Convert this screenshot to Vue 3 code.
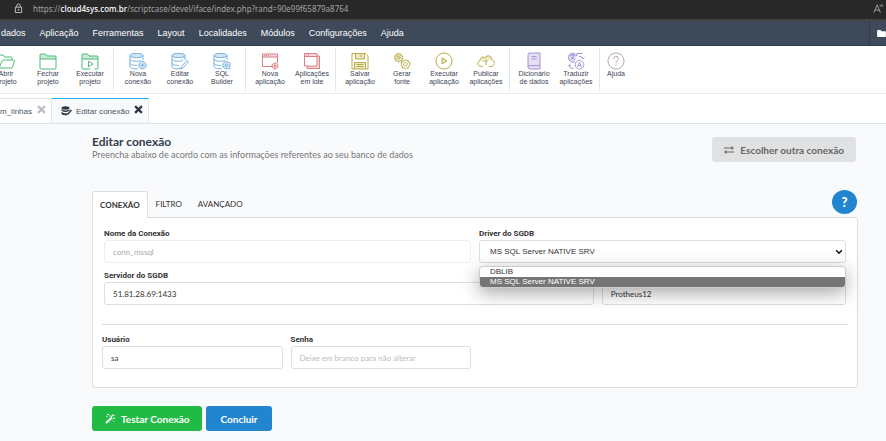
<template>
  <div class="page">
    <div class="address-bar">
      <svg class="lock" viewBox="0 0 10 12">
        <path d="M3 4.500V3a2 2 0 0 1 4 0v1.500M1.500 4.500h7v6h-7z" />
        <circle cx="5" cy="7.500" r=".6" />
      </svg>
      <div class="url">https://<b>cloud4sys.com.br</b>/scriptcase/devel/iface/index.php?rand=90e99f65879a8764</div>
      <svg class="read-aloud" viewBox="0 0 12 12">
        <path d="M1 10.500L4.500 2L8 10.500M2.200 7.800h4.600M7.500 2l1 2.200M9.300 1l1.500 3.200" />
      </svg>
    </div>

    <nav class="menu">
      <a v-for="m in menu" :key="m" href="#">{{ m }}</a>
      <button class="folder" aria-label="Projeto">
        <svg viewBox="0 0 10 8"><path d="M0 1q0-1 1-1h3l1 1.500h4q1 0 1 1V7q0 1-1 1H1q-1 0-1-1z" /></svg>
      </button>
    </nav>

    <div class="toolbar">
      <div v-for="(group, g) in toolbar" :key="g" class="group">
        <button v-for="item in group.items" :key="item.label" class="tool" :class="group.color">
          <svg viewBox="0 0 18 18">
            <path v-if="item.fill" class="tint" :d="icons[item.fill]" />
            <path :d="icons[item.icon]" />
          </svg>
          <span>{{ item.label }}</span>
        </button>
      </div>
    </div>

    <div class="tabs">
      <div class="tab first">
        <a href="#">m_linhas</a>
        <button class="close" aria-label="Fechar m_linhas">
          <svg viewBox="0 0 8 8"><path d="M1 1l6 6M7 1L1 7" /></svg>
        </button>
      </div>
      <div class="tab active">
        <svg class="db" viewBox="0 0 11 10">
          <ellipse cx="4.500" cy="2" rx="4" ry="1.700" />
          <path d="M.5 3.200q4 2.400 8 0v1.600q-4 2.400-8 0zM.5 6q4 2.400 6.500.8L6 9.200Q2.500 9.800.5 8z" />
          <path d="M10 3.500l1 1-3.500 4-1.400.5.400-1.500z" />
        </svg>
        <a href="#">Editar conexão</a>
        <button class="close" aria-label="Fechar Editar conexão">
          <svg viewBox="0 0 8 8"><path d="M1 1l6 6M7 1L1 7" /></svg>
        </button>
      </div>
    </div>

    <main class="content">
      <header class="heading">
        <div>
          <h1>Editar conexão</h1>
          <p>Preencha abaixo de acordo com as informações referentes ao seu banco de dados</p>
        </div>
        <button class="btn grey">
          <svg viewBox="0 0 10 8"><path d="M0 2h8M2 6h8" /><path class="solid" d="M7.500 0L10 2L7.500 4zM2.500 4L0 6l2.500 2z" /></svg>
          Escolher outra conexão
        </button>
      </header>

      <div class="panel-tabs">
        <button class="panel-tab" :class="{ active: current === t }" v-for="t in panelTabs" :key="t" @click="current = t">{{ t }}</button>
        <button class="help" aria-label="Ajuda">?</button>
      </div>

      <form class="panel" @submit.prevent>
        <div class="row half">
          <div class="field">
            <label for="name">Nome da Conexão</label>
            <input id="name" type="text" value="conn_mssql" disabled>
          </div>
          <div class="field">
            <label for="driver">Driver do SGDB</label>
            <div class="select">
              <select id="driver" v-model="driver">
                <option v-for="d in drivers" :key="d">{{ d }}</option>
              </select>
              <svg viewBox="0 0 8 6"><path d="M1.200 1.300L4 4.200l2.800-2.900" /></svg>
              <ul class="options">
                <li v-for="d in drivers" :key="d" :class="{ selected: d === driver }" @click="driver = d">{{ d }}</li>
              </ul>
            </div>
          </div>
        </div>
        <div class="row server">
          <div class="field">
            <label for="server">Servidor do SGDB</label>
            <input id="server" type="text" value="51.81.28.69:1433">
          </div>
          <div class="field">
            <label for="database">Banco de dados</label>
            <input id="database" type="text" value="Protheus12">
          </div>
        </div>
        <div class="row login">
          <div class="field">
            <label for="user">Usuário</label>
            <input id="user" type="text" value="sa">
          </div>
          <div class="field">
            <label for="password">Senha</label>
            <input id="password" type="password" placeholder="Deixe em branco para não alterar">
          </div>
        </div>
      </form>

      <div class="actions">
        <button class="btn green">
          <svg viewBox="0 0 10 10"><path class="wand" d="M1 9L7 3.500" /><path d="M6 2.500L9.500 1M8 4.500l2-.5M4 1.500l1.500 1M1 2l1.500 1M8 6.500l1 1M2 .5h2M7.500.5l-.5 1.500" /></svg>
          Testar Conexão
        </button>
        <button class="btn blue">Concluir</button>
      </div>
    </main>
  </div>
</template>

<script setup>
import { ref } from 'vue'

const menu = ['dados', 'Aplicação', 'Ferramentas', 'Layout', 'Localidades', 'Módulos', 'Configurações', 'Ajuda']
const panelTabs = ['CONEXÃO', 'FILTRO', 'AVANÇADO']
const current = ref('CONEXÃO')
const drivers = ['DBLIB', 'MS SQL Server NATIVE SRV']
const driver = ref('MS SQL Server NATIVE SRV')

const cylinder = 'M1 3.500C1 .7 14 .7 14 3.500S1 6.300 1 3.500V7c0 2.600 8 2.700 11 1.500M14 3.500v4.500M1 7v4c0 2 4 2.500 7 2.300M1 11v3.500c0 2 4 2.500 8 2.200'
const icons = {
  folderOpen: 'M2 16L1 4q0-1 1-1h4l1.500 2H14q1 0 1 1v2M2 16h12.500q.8 0 1-1L17.500 9q.2-1-.8-1H6.500q-1 0-1.300.8z',
  folder: 'M1 3q0-1 1-1h4.500L8 4h8q1 0 1 1v11q0 1-1 1H2q-1 0-1-1zM1 7h16',
  folderTop: 'M1 2h5.500L8 4h9v3H1z',
  folderRun: 'M9 17H2q-1 0-1-1V3q0-1 1-1h4.500L8 4h8q1 0 1 1v11q0 1-1 1h-2.500M1 7h16M7.500 9.200v5.600l4.500-2.800z',
  dbNew: cylinder + 'M13.500 9.500a3.700 3.700 0 1 0 .01 0M13.500 11.500v3.400M11.800 13.200h3.400',
  dbEdit: cylinder + 'M16 8.500l1.500 1.500-5.500 6-2.500 1 1-2.500z',
  dbSql: cylinder + 'M13.500 9.500a3.700 3.700 0 1 0 .01 0M13.500 12a1.300 1.300 0 1 0 .01 0M16 16l1.500 1.500',
  dbTop: 'M1 3.500C1 .7 14 .7 14 3.500S1 6.300 1 3.500z',
  dbTint: 'M1 3.500C1 .7 14 .7 14 3.500S1 6.300 1 3.500zM13.500 9.500a3.700 3.700 0 1 0 .01 0z',
  windowNew: 'M11 14.500H1.500V2h15v9M1.500 5h15M14 11a3 3 0 1 0 .01 0M14 12.500v3M12.500 14h3M3 3.500h1M5 3.500h1M7 3.500h1',
  windowTop: 'M1.500 2h15v3h-15zM14 11a3 3 0 1 0 .01 0z',
  windows: 'M1.500 1.500H14v12.500H1.500zM1.500 4.500H14M14 4h2.500v12.500H4V14M3 3h1M5 3h1',
  windowsTint: 'M14 4h2.500v12.500H4V14h10zM1.500 1.500H14v3H1.500z',
  save: 'M1 1.500h13.500L17 4v13H1zM4.500 1.500V7h9V1.500M10 2.500V5M3.500 17v-6.500h11V17M5.500 12.500h7M5.500 14.500h7',
  saveTint: 'M4.500 1.500h9V7h-9zM3.500 10.500h11V17h-11z',
  gears: 'M5.500 1l1 1.200 1.500-.2.300 1.500 1.500.6-.5 1.400.7 1.400-1.300.8-.2 1.500-1.500-.1L5.500 10.200 4.400 9.100l-1.500.1-.2-1.500-1.300-.8.7-1.400-.5-1.400 1.500-.6L3.400 2l1.500.2zM5.500 4a1.500 1.500 0 1 0 .01 0M12.500 7.500l1 1.300 1.600-.2.300 1.500 1.600.6-.6 1.500.6 1.400-1.500.9-.3 1.600-1.600-.1-1.100 1.100-1.200-1.100-1.600.1-.2-1.600-1.500-.9.800-1.400-.6-1.500 1.500-.6.300-1.500 1.600.2zM12.500 10.500a1.800 1.800 0 1 0 .01 0',
  gearsTint: 'M5.500 1.800a3.800 3.800 0 1 0 .01 0z',
  play: 'M9 1a8 8 0 1 0 .01 0M7 6v6l5-3z',
  playTint: 'M7 6v6l5-3z',
  cloud: 'M6 14.500H4.500C.2 14.500-.2 9.500 3 8.500 3 5 6.500 4 8 6c2-4 7.500-2 6.500 1.800 4 .7 3.500 6.700-.5 6.700h-2M9 13V8M7 9.800L9 7.800l2 2',
  cloudTint: 'M3 8.500C3 5 6.500 4 8 6c2-4 7.500-2 6.500 1.800L11 8 9 7 6 10z',
  book: 'M15 1H5Q3 1 3 3v12q0 2 2 2h10zM15 13.500H5q-2 0-2 1.500M6.500 4.500h5M6.500 7h5',
  bookTint: 'M3 13.500h12V17H5q-2 0-2-2zM3 3q0-2 2-2h10v12.500H3z',
  translate: 'M8 9.500A4.400 4.400 0 1 1 9.800 4M3 3.200h5M5.500 2v1.200M7 3.200Q6.500 6.500 3.500 7.500M4 4.500q1 2 3.500 3M9.800 4V1.500h5.700M12.500 8.500a4.300 4.300 0 1 0 .01 0M10.500 15.200l2-5 2 5M11.200 13.500h2.600M12 4.500h1.500q2 0 2.500 2.500M14.500 5.500L16 7l1.500-1.500M6.500 16.500H5q-2 0-2.500-3M1 14l1.500-1.500L4 14',
  translateTint: 'M5.500 1a4.300 4.300 0 1 0 .01 0z',
  help: 'M9 1a8 8 0 1 0 .01 0M6.500 7c0-3.500 5-3.200 5-.5C11.500 8.500 9 8.500 9 11M9 12.500v1.300'
}
const toolbar = [
  { color: 'green', items: [
    { label: 'Abrir\nprojeto', icon: 'folderOpen' },
    { label: 'Fechar\nprojeto', icon: 'folder', fill: 'folderTop' },
    { label: 'Executar\nprojeto', icon: 'folderRun', fill: 'folderTop' }
  ] },
  { color: 'blue', items: [
    { label: 'Nova\nconexão', icon: 'dbNew', fill: 'dbTint' },
    { label: 'Editar\nconexão', icon: 'dbEdit', fill: 'dbTop' },
    { label: 'SQL\nBuilder', icon: 'dbSql', fill: 'dbTint' }
  ] },
  { color: 'red', items: [
    { label: 'Nova\naplicação', icon: 'windowNew', fill: 'windowTop' },
    { label: 'Aplicações\nem lote', icon: 'windows', fill: 'windowsTint' }
  ] },
  { color: 'yellow', items: [
    { label: 'Salvar\naplicação', icon: 'save', fill: 'saveTint' },
    { label: 'Gerar\nfonte', icon: 'gears', fill: 'gearsTint' },
    { label: 'Executar\naplicação', icon: 'play', fill: 'playTint' },
    { label: 'Publicar\naplicações', icon: 'cloud', fill: 'cloudTint' }
  ] },
  { color: 'purple', items: [
    { label: 'Dicionário\nde dados', icon: 'book', fill: 'bookTint' },
    { label: 'Traduzir\naplicações', icon: 'translate', fill: 'translateTint' }
  ] },
  { color: 'brown', items: [
    { label: 'Ajuda', icon: 'help' }
  ] }
]
</script>

<style>
body {
  background: #f9fafc;
}
</style>

<style scoped>
.page {
  font-family: Lato, sans-serif;
  font-size: 8px;
  color: #333;
  overflow: hidden;
}

.page * {
  box-sizing: border-box;
}

button {
  border: 0;
  padding: 0;
  background: none;
  font-family: inherit;
  cursor: pointer;
}

a {
  color: inherit;
  text-decoration: none;
}

svg {
  fill: none;
  stroke: currentColor;
}

.address-bar {
  display: flex;
  align-items: center;
  height: 21px;
  padding: 0 2px 2px 14px;
  background: #282828;
  border-bottom: 2px solid #444;
  color: #a3a3a3;
  font-family: "Noto Sans", sans-serif;
  font-size: 8px;
}

.address-bar b {
  color: #fff;
  font-weight: 500;
}

.lock {
  width: 9px;
  height: 11px;
  margin-right: 10px;
  color: #ccc;
}

.url {
  flex: 1;
  white-space: nowrap;
}

.read-aloud {
  width: 11px;
  height: 11px;
}

.menu {
  display: flex;
  align-items: center;
  gap: 14px;
  height: 25px;
  padding-left: 1px;
  background: #3e4959;
  border-bottom: 1px solid #323c4b;
  color: #fff;
  font-family: "Liberation Sans", Arial, sans-serif;
  font-size: 9px;
}

.folder {
  align-self: stretch;
  width: 17px;
  margin-left: auto;
  padding-left: 7px;
  border-left: 1px solid #303a48;
  color: #fff;
  overflow: hidden;
}

.folder svg {
  display: block;
  width: 9px;
  height: 7px;
  fill: #fff;
  stroke: none;
}

.toolbar {
  display: flex;
  height: 48px;
  padding: 2px 0;
  margin-left: -18px;
  background: #fff;
  border-bottom: 1px solid #e4eaf0;
}

.group {
  display: flex;
  padding: 0 2px 0 3px;
  border-right: 1px solid #dfe6ed;
}

.group:last-child {
  border: 0;
}

.tool {
  display: flex;
  flex-direction: column;
  align-items: center;
  width: 42px;
  padding-top: 4px;
}

.group:last-child .tool {
  width: 26px;
}

.tool svg {
  width: 18px;
  height: 18px;
}

.tool span {
  color: #3c4555;
  font-family: "Liberation Sans", Arial, sans-serif;
  font-size: 7px;
  line-height: 8px;
  white-space: pre;
}

.tint {
  fill: currentColor;
  fill-opacity: 0.3;
  stroke: none;
}

.tool.green { color: #4dbb78; }
.tool.blue { color: #74b1e0; }
.tool.red { color: #dc7f86; }
.tool.yellow { color: #b9ab45; }
.tool.purple { color: #a894d8; }
.tool.brown { color: #b5a9a4; }

.tabs {
  display: flex;
  height: 30px;
  padding-top: 4px;
  background: #fff;
  border-bottom: 1px solid #dbe2e9;
  color: #4a5464;
  font-family: "Liberation Sans", Arial, sans-serif;
  font-size: 8px;
}

.tab {
  display: flex;
  align-items: center;
  border-top: 1px solid #dfe6ed;
  border-right: 1px solid #dfe6ed;
}

.tab.first {
  padding-right: 5px;
}

.tab.active {
  padding: 0 5px 0 9px;
  background: #f9fafc;
  border-top: 1px solid #1fb0f5;
}

.close {
  margin: 0 0 3px 5px;
  color: #b9bec6;
}

.close svg {
  display: block;
  width: 9px;
  height: 9px;
  stroke-width: 2;
}

.active .close {
  color: #2c3645;
}

.db {
  width: 11px;
  height: 10px;
  margin-right: 4px;
  fill: #2c3645;
  stroke: none;
}

.content {
  padding: 11px 28px 11px 92px;
}

.heading {
  display: flex;
  justify-content: space-between;
  align-items: flex-start;
  height: 56px;
  padding-right: 2px;
}

h1 {
  margin: 0;
  color: #333d4d;
  font-size: 12px;
  line-height: 14px;
}

p {
  margin: 0;
  color: #777;
  font-size: 9px;
  line-height: 12px;
}

.btn {
  display: flex;
  align-items: center;
  height: 25px;
  padding: 0 13px;
  border-radius: 3px;
  color: #fff;
  font-size: 10px;
  font-weight: bold;
}

.btn svg {
  width: 10px;
  height: 10px;
  margin-right: 6px;
}

.btn.grey {
  margin-top: 2px;
  padding: 0 12px;
  background: #e0e1e2;
  color: #666;
}

.btn.green { background: #21ba45; }

.btn.blue {
  padding: 0 14px;
  background: #2185d0;
}

.solid {
  fill: currentColor;
  stroke: none;
}

.wand {
  stroke-width: 2;
}

.panel-tabs {
  display: flex;
  height: 26px;
}

.panel-tab {
  padding: 0 7px;
  border: 1px solid transparent;
  color: #333;
  font-size: 8px;
}

.panel-tab.active {
  position: relative;
  z-index: 1;
  margin-bottom: -1px;
  border-color: #dcdddf;
  border-bottom: 0;
  border-radius: 3px 3px 0 0;
  background: #fff;
  font-weight: bold;
}

.help {
  width: 25px;
  height: 24px;
  margin: -1px 1px 0 auto;
  border-radius: 50%;
  background: #2185d0;
  color: #fff;
  font-size: 13px;
  font-weight: 900;
}

.panel {
  padding: 10px 11px 18px;
  border: 1px solid #dcdddf;
  border-radius: 0 3px 3px 3px;
  background: #fff;
}

.row {
  display: grid;
  gap: 8px;
}

.half {
  grid-template-columns: 1fr 1fr;
}

.server {
  grid-template-columns: 66% 1fr;
  margin-top: 7px;
}

.login {
  grid-template-columns: repeat(4, 1fr);
  margin: 19px -2px 0;
  padding-top: 9px;
  border-top: 1px solid #dcdddf;
}

label {
  display: block;
  color: #333;
  font-family: Roboto, sans-serif;
  font-size: 8px;
  font-weight: bold;
  line-height: 12px;
}

input,
select {
  display: block;
  width: 100%;
  height: 23px;
  padding: 0 8px;
  border: 1px solid #dededf;
  border-radius: 3px;
  outline: 0;
  background: #fff;
  color: #333;
  font-family: Lato, sans-serif;
  font-size: 8px;
}

input:disabled {
  border-color: #eee;
  color: #aaa;
}

input::placeholder {
  color: #bbb;
}

select {
  appearance: none;
  padding: 0 10px;
  font-family: "Liberation Sans", Arial, sans-serif;
}

.select {
  position: relative;
}

.select svg {
  position: absolute;
  top: 9px;
  right: 3px;
  width: 8px;
  height: 6px;
  color: #111;
  stroke-width: 1.500;
  pointer-events: none;
}

.options {
  position: absolute;
  z-index: 2;
  top: 26px;
  left: 0;
  right: 0;
  margin: 0;
  padding: 0;
  overflow: hidden;
  list-style: none;
  border: 1px solid #ccc;
  border-radius: 4px;
  background: #fff;
  box-shadow: 0 5px 18px rgba(0, 0, 0, 0.35);
  font-family: "Liberation Sans", Arial, sans-serif;
  font-size: 8px;
  line-height: 10px;
}

.options li {
  padding: 0 10px;
}

.options .selected {
  background: #757575;
  color: #fff;
}

.actions {
  display: flex;
  gap: 4px;
  margin-top: 18px;
}
</style>
